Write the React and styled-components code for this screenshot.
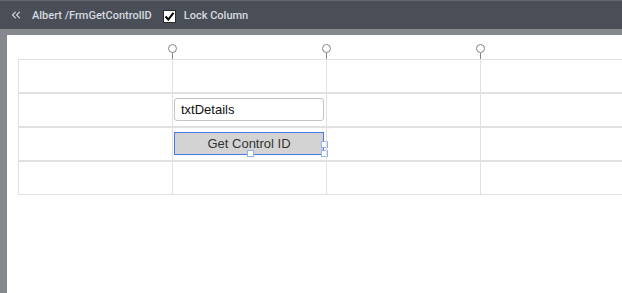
import styled, { createGlobalStyle } from "styled-components";
import { ChevronsLeft } from "lucide-react";

const GlobalStyle = createGlobalStyle`
  html, body {
    margin: 0;
    padding: 0;
    background: #fff;
    overflow: hidden;
  }
`;

const COL = 154;

const Page = styled.div`
  width: 622px;
  height: 293px;
  display: flex;
  flex-direction: column;
  font-family: Roboto, "Liberation Sans", sans-serif;
`;

const TopBar = styled.header`
  height: 28px;
  border-top: 1px solid #62666d;
  background: #4a4f57;
  display: flex;
  align-items: center;
  padding-left: 9px;
  color: #d6dae0;
  font-size: 11px;
  font-weight: 500;
`;

const Crumb = styled.span`
  margin-left: 9px;
`;

const Check = styled.span`
  width: 13px;
  height: 13px;
  margin: 2px 8px 0 11px;
  box-sizing: border-box;
  background: #fff;
  border: 1px solid #2b2b2b;
  display: flex;
  align-items: center;
  justify-content: center;
`;

const Band = styled.div`
  height: 6px;
  background: #85888c;
`;

const Body = styled.div`
  flex: 1;
  display: flex;
`;

const SideStrip = styled.div`
  width: 7px;
  background: #85888c;
`;

const Canvas = styled.main`
  flex: 1;
  padding: 9px 0 0 11px;
  overflow: hidden;
`;

const HandleRow = styled.div`
  display: grid;
  grid-template-columns: repeat(4, ${COL}px);
  height: 15px;
`;

const Handle = styled.div`
  justify-self: end;
  width: 9px;
  margin-right: -5px;
  display: flex;
  flex-direction: column;
  align-items: center;

  &::before {
    content: "";
    width: 9px;
    height: 9px;
    box-sizing: border-box;
    border: 1.5px solid #80868e;
    border-radius: 50%;
  }

  &::after {
    content: "";
    width: 1px;
    flex: 1;
    background: #80868e;
  }
`;

const Grid = styled.div`
  width: ${COL * 4}px;
`;

const Row = styled.div`
  display: grid;
  grid-template-columns: repeat(4, ${COL}px);
  border-top: 1px solid #e1e1e1;
  border-bottom: 1px solid #e1e1e1;
`;

const Cell = styled.div`
  position: relative;
  height: 32px;
  border-left: 1px solid #e1e1e1;
  box-sizing: border-box;
  padding: 4px 0 0 1px;
`;

const TextBox = styled.div`
  width: 150px;
  height: 23px;
  box-sizing: border-box;
  border: 1px solid #c4c4c4;
  border-radius: 3px;
  padding-left: 6px;
  display: flex;
  align-items: center;
  font-family: "Liberation Sans", Arial, sans-serif;
  font-size: 13px;
  color: #111;
`;

const Button = styled.div`
  position: relative;
  width: 150px;
  height: 23px;
  box-sizing: border-box;
  border: 1px solid #4a76e6;
  background: #d3d3d3;
  display: flex;
  align-items: center;
  justify-content: center;
  font-family: "Liberation Sans", Arial, sans-serif;
  font-size: 13px;
  color: #333;
`;

const Grip = styled.span`
  position: absolute;
  width: 7px;
  height: 7px;
  box-sizing: border-box;
  background: #fff;
  border: 1px solid #93b2f4;
  left: ${(p) => p.$x}px;
  top: ${(p) => p.$y}px;
`;

const rows = [0, 1, 2, 3];

export default function App() {
  return (
    <Page>
      <GlobalStyle />
      <TopBar>
        <ChevronsLeft size={14} strokeWidth={2.2} color="#c9cdd3" />
        <Crumb>Albert /FrmGetControlID</Crumb>
        <Check>
          <svg width="11" height="11" viewBox="0 0 11 11">
            <path d="M1.5 5.5 L4.3 8.5 L9.5 1.8" fill="none" stroke="#000" strokeWidth="2" />
          </svg>
        </Check>
        <span>Lock Column</span>
      </TopBar>
      <Band />
      <Body>
        <SideStrip />
        <Canvas>
          <HandleRow>
            <Handle />
            <Handle />
            <Handle />
          </HandleRow>
          <Grid>
            {rows.map((r) => (
              <Row key={r}>
                <Cell />
                <Cell>
                  {r === 1 && <TextBox>txtDetails</TextBox>}
                  {r === 2 && (
                    <Button>
                      Get Control ID
                      <Grip $x={146} $y={8} />
                      <Grip $x={146} $y={17} />
                      <Grip $x={72} $y={17} />
                    </Button>
                  )}
                </Cell>
                <Cell />
                <Cell />
              </Row>
            ))}
          </Grid>
        </Canvas>
      </Body>
    </Page>
  );
}
